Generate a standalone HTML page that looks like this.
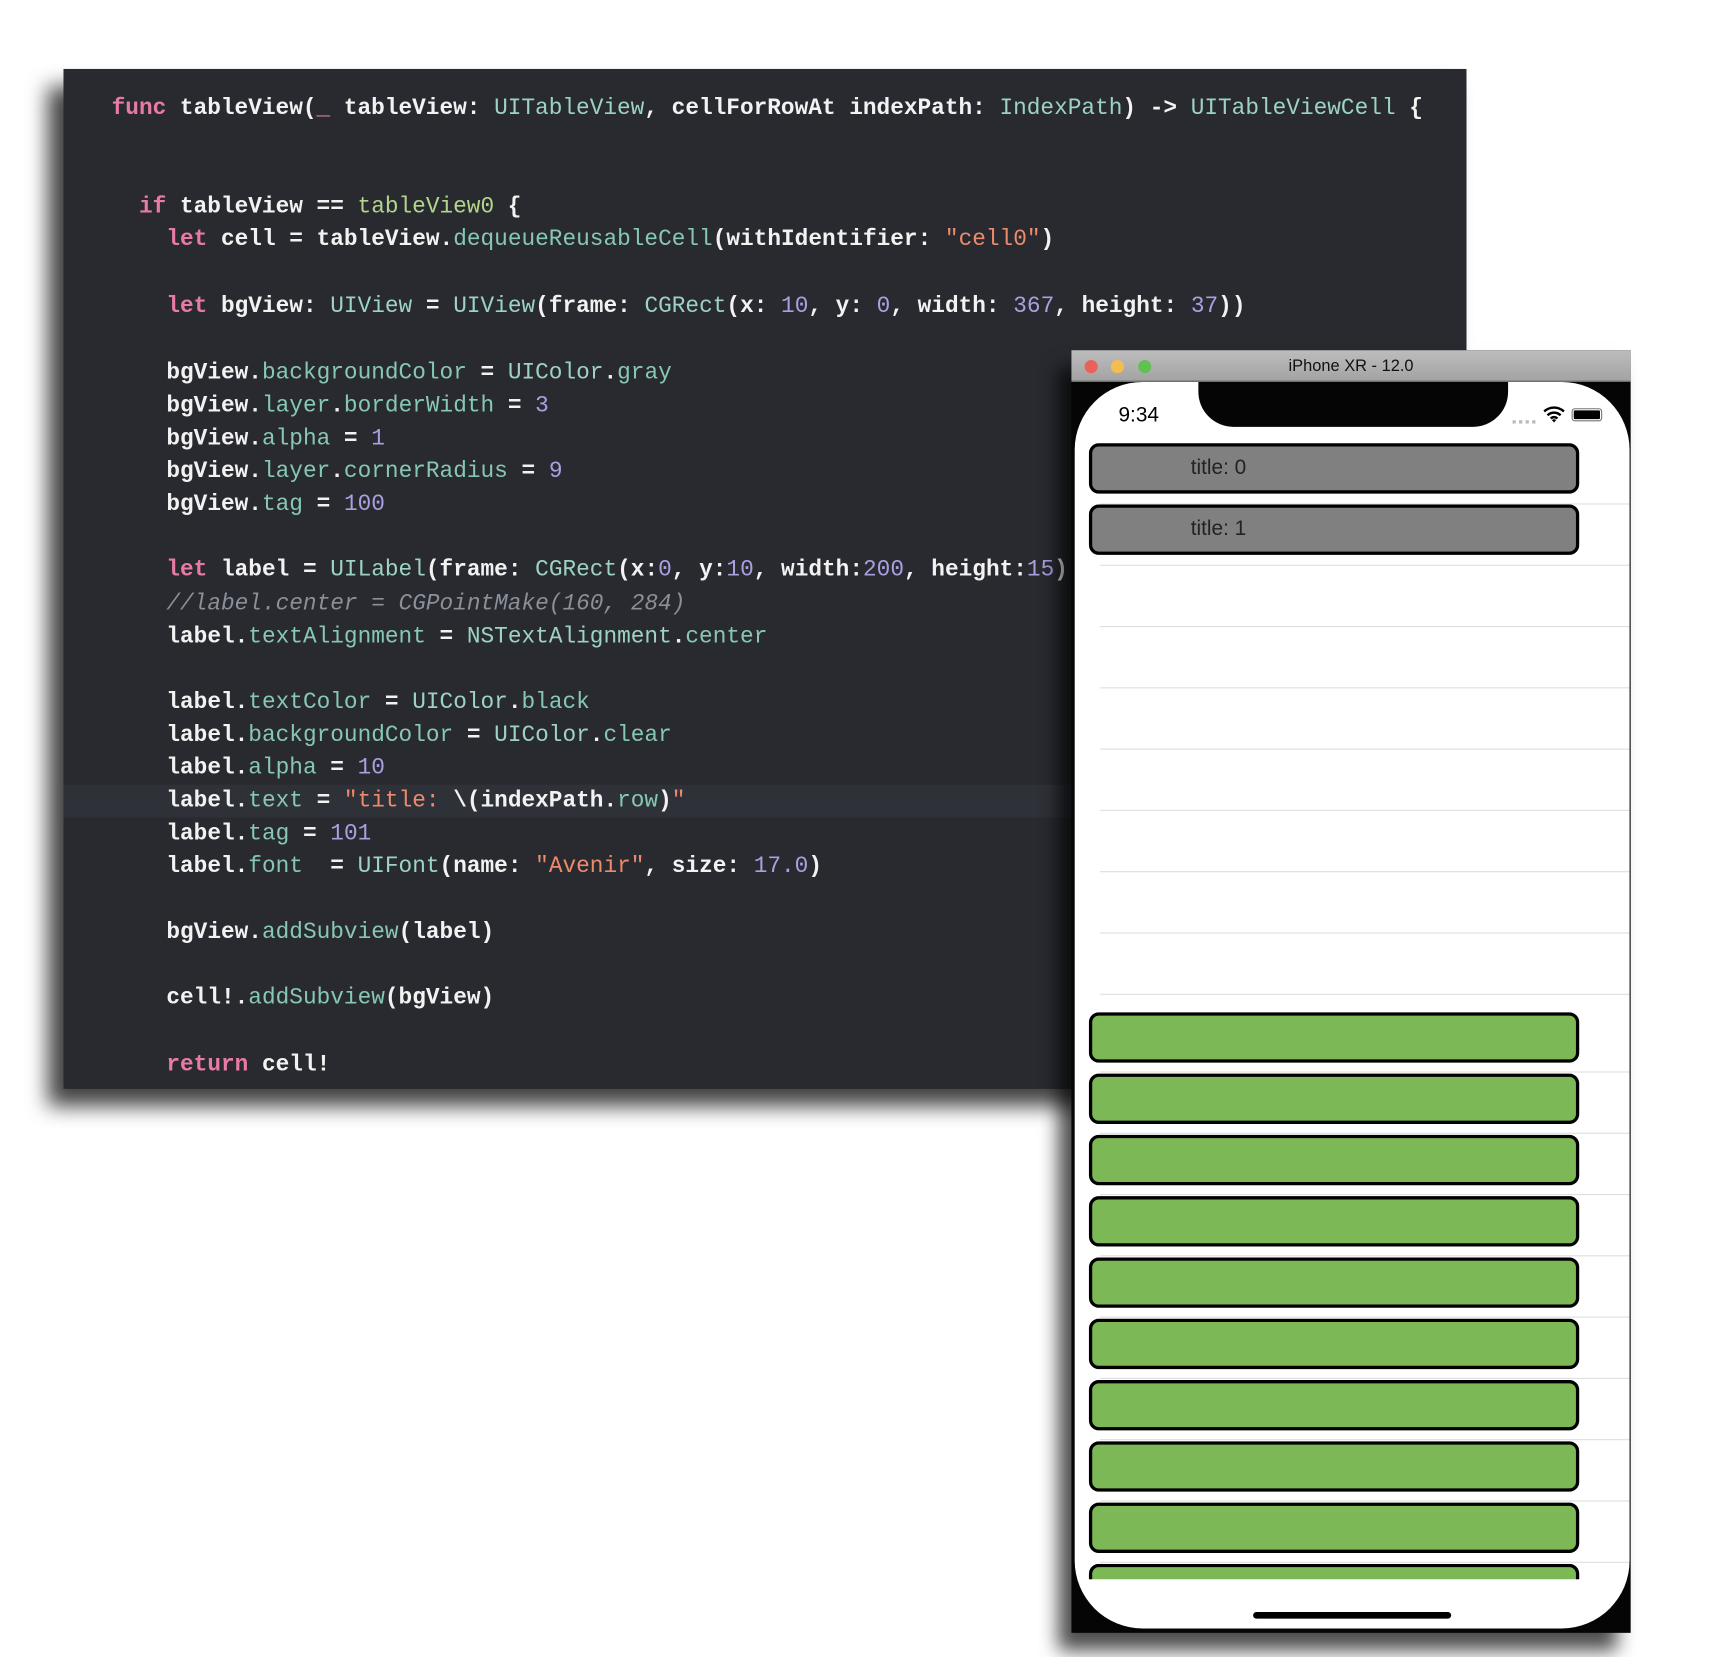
<!DOCTYPE html>
<html><head><meta charset="utf-8"><style>
html,body{margin:0;padding:0;background:#fff;width:1716px;height:1656px;overflow:hidden}
#w{position:absolute;left:0;top:0;width:1568px;height:1514px;transform:scale(1.0944);transform-origin:0 0}
#code{position:absolute;left:58px;top:63px;width:1282px;height:932px;background:#292a30;box-shadow:-14px 16px 18px rgba(0,0,0,.75)}
.hl{position:absolute;left:0;top:654px;width:921px;height:30px;background:#2f3139}
.l{position:absolute;white-space:pre;font-family:"Liberation Mono",monospace;font-size:20.8px;color:#f2f2f2;font-weight:bold;line-height:30px}
.k{color:#e77aa8}.t{color:#9cd3c4;font-weight:normal}.m{color:#86c8b4;font-weight:normal}.g{color:#b3d58b;font-weight:normal}.n{color:#a8a0e0;font-weight:normal}.s{color:#ee8a6c;font-weight:normal}.c{color:#8a8f99;font-style:italic;font-weight:normal}
#sim{position:absolute;left:979px;top:320px;width:511px;height:1172px;background:#050505;box-shadow:-12px 16px 16px rgba(0,0,0,.7)}
#tb{position:absolute;left:0;top:0;width:511px;height:28px;background:linear-gradient(#bdbdbd,#a3a3a3);border-bottom:1px solid #777;font-family:"Liberation Sans",sans-serif;font-size:15px;color:#111;text-align:center;line-height:29px}
.dot{position:absolute;top:9px;width:12px;height:12px;border-radius:50%}
#scr{position:absolute;left:3px;top:29px;width:507px;height:1139px;background:#fff;border-radius:62px;overflow:hidden}
#notch{position:absolute;left:113px;top:-2px;width:283px;height:43px;background:#050505;border-radius:0 0 32px 32px}
.sep{position:absolute;left:23px;right:0;height:1px;background:#dedede}
.cell{position:absolute;left:13px;width:442px;height:40px;border:3px solid #000;border-radius:9px;box-sizing:content-box}
.gr{background:#808080}.gn{background:#7cb956}
.ct{position:absolute;left:90px;top:9px;font-family:"Liberation Sans",sans-serif;font-size:19px;color:#222}
</style></head><body><div id="w">
<div id="code">
<div class="hl"></div>
<div class="l" style="left:44px;top:22px"><span class="k">func</span> tableView(<span class="k">_</span> tableView: <span class="t">UITableView</span>, cellForRowAt indexPath: <span class="t">IndexPath</span>) -&gt; <span class="t">UITableViewCell</span> {</div>
<div class="l" style="left:69px;top:112px"><span class="k">if</span> tableView == <span class="g">tableView0</span> {</div>
<div class="l" style="left:94px;top:142px"><span class="k">let</span> cell = tableView.<span class="m">dequeueReusableCell</span>(withIdentifier: <span class="s">"cell0"</span>)</div>
<div class="l" style="left:94px;top:203px"><span class="k">let</span> bgView: <span class="t">UIView</span> = <span class="t">UIView</span>(frame: <span class="t">CGRect</span>(x: <span class="n">10</span>, y: <span class="n">0</span>, width: <span class="n">367</span>, height: <span class="n">37</span>))</div>
<div class="l" style="left:94px;top:264px">bgView.<span class="m">backgroundColor</span> = <span class="t">UIColor</span>.<span class="m">gray</span></div>
<div class="l" style="left:94px;top:294px">bgView.<span class="m">layer</span>.<span class="m">borderWidth</span> = <span class="n">3</span></div>
<div class="l" style="left:94px;top:324px">bgView.<span class="m">alpha</span> = <span class="n">1</span></div>
<div class="l" style="left:94px;top:354px">bgView.<span class="m">layer</span>.<span class="m">cornerRadius</span> = <span class="n">9</span></div>
<div class="l" style="left:94px;top:384px">bgView.<span class="m">tag</span> = <span class="n">100</span></div>
<div class="l" style="left:94px;top:444px"><span class="k">let</span> label = <span class="t">UILabel</span>(frame: <span class="t">CGRect</span>(x:<span class="n">0</span>, y:<span class="n">10</span>, width:<span class="n">200</span>, height:<span class="n">15</span>))</div>
<div class="l" style="left:94px;top:475px"><span class="c">//label.center = CGPointMake(160, 284)</span></div>
<div class="l" style="left:94px;top:505px">label.<span class="m">textAlignment</span> = <span class="t">NSTextAlignment</span>.<span class="m">center</span></div>
<div class="l" style="left:94px;top:565px">label.<span class="m">textColor</span> = <span class="t">UIColor</span>.<span class="m">black</span></div>
<div class="l" style="left:94px;top:595px">label.<span class="m">backgroundColor</span> = <span class="t">UIColor</span>.<span class="m">clear</span></div>
<div class="l" style="left:94px;top:625px">label.<span class="m">alpha</span> = <span class="n">10</span></div>
<div class="l" style="left:94px;top:655px">label.<span class="m">text</span> = <span class="s">"title: </span>\(indexPath.<span class="m">row</span>)<span class="s">"</span></div>
<div class="l" style="left:94px;top:685px">label.<span class="m">tag</span> = <span class="n">101</span></div>
<div class="l" style="left:94px;top:715px">label.<span class="m">font</span>  = <span class="t">UIFont</span>(name: <span class="s">"Avenir"</span>, size: <span class="n">17.0</span>)</div>
<div class="l" style="left:94px;top:775px">bgView.<span class="m">addSubview</span>(label)</div>
<div class="l" style="left:94px;top:835px">cell!.<span class="m">addSubview</span>(bgView)</div>
<div class="l" style="left:94px;top:896px"><span class="k">return</span> cell!</div>
</div>
<div id="sim">
<div id="tb">iPhone XR - 12.0</div>
<div class="dot" style="left:12px;background:#e9625a"></div>
<div class="dot" style="left:36px;background:#f4bd4f"></div>
<div class="dot" style="left:61px;background:#60c152"></div>
<div id="scr">
<div id="notch"></div>
<div style="position:absolute;left:40px;top:20px;font-family:'Liberation Sans',sans-serif;font-size:19px;color:#000">9:34</div>
<div style="position:absolute;left:400px;top:35px;width:22px;height:3px;background-image:linear-gradient(90deg,#bbb 3px,transparent 3px);background-size:6px 3px"></div>
<svg style="position:absolute;left:428px;top:22px" width="20" height="15" viewBox="0 0 20 15"><path d="M1 5a13 13 0 0 1 18 0M4 8.5a8.5 8.5 0 0 1 12 0M7 11.5a4 4 0 0 1 6 0" fill="none" stroke="#000" stroke-width="2.2"/><path d="M10 15l-2-2.2a3 3 0 0 1 4 0z"/></svg>
<div style="position:absolute;left:454px;top:24px;width:28px;height:12px;border:1px solid #777;border-radius:3px;box-sizing:border-box;padding:1px"><div style="background:#000;width:100%;height:100%;border-radius:1px"></div></div>
<div class="cell gr" style="top:56px"><span class="ct">title: 0</span></div>
<div class="sep" style="top:111px"></div>
<div class="cell gr" style="top:112px"><span class="ct">title: 1</span></div>
<div class="sep" style="top:167px"></div>
<div class="sep" style="top:223px"></div>
<div class="sep" style="top:279px"></div>
<div class="sep" style="top:335px"></div>
<div class="sep" style="top:391px"></div>
<div class="sep" style="top:447px"></div>
<div class="sep" style="top:503px"></div>
<div class="sep" style="top:559px"></div>
<div class="cell gn" style="top:576px"></div>
<div class="sep" style="top:630px"></div>
<div class="cell gn" style="top:632px"></div>
<div class="sep" style="top:686px"></div>
<div class="cell gn" style="top:688px"></div>
<div class="sep" style="top:742px"></div>
<div class="cell gn" style="top:744px"></div>
<div class="sep" style="top:798px"></div>
<div class="cell gn" style="top:800px"></div>
<div class="sep" style="top:854px"></div>
<div class="cell gn" style="top:856px"></div>
<div class="sep" style="top:910px"></div>
<div class="cell gn" style="top:912px"></div>
<div class="sep" style="top:966px"></div>
<div class="cell gn" style="top:968px"></div>
<div class="sep" style="top:1022px"></div>
<div class="cell gn" style="top:1024px"></div>
<div class="sep" style="top:1078px"></div>
<div style="position:absolute;left:0;top:1080px;width:507px;height:14px;overflow:hidden"><div class="cell gn" style="top:0"></div></div>
<div style="position:absolute;left:163px;top:1124px;width:181px;height:6px;border-radius:3px;background:#000"></div>
</div>
</div>
</div></body></html>
